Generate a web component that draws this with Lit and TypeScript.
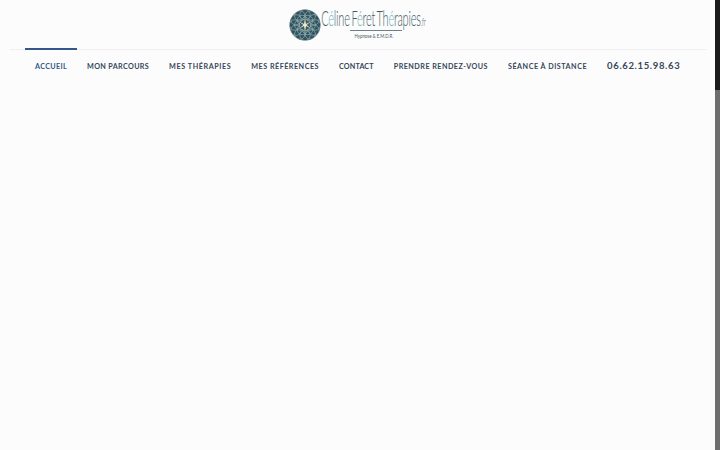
import { LitElement, html, css, svg } from "lit";
import { customElement } from "lit/decorators.js";

const items = [
  { label: "ACCUEIL", active: true, spacing: 0.35 },
  { label: "MON PARCOURS", active: false, spacing: 0.35 },
  { label: "MES THÉRAPIES", active: false, spacing: 0.58 },
  { label: "MES RÉFÉRENCES", active: false, spacing: 0.5 },
  { label: "CONTACT", active: false, spacing: 0.15 },
  { label: "PRENDRE RENDEZ-VOUS", active: false, spacing: 0.47 },
  { label: "SÉANCE À DISTANCE", active: false, spacing: 0.52 },
];

function petals() {
  const out = [];
  for (let ring = 1; ring <= 2; ring++) {
    const n = ring * 6;
    for (let i = 0; i < n; i++) {
      const a = (i / n) * Math.PI * 2;
      const r = ring * 5.2;
      out.push(
        svg`<circle cx=${16 + r * Math.cos(a)} cy=${16 + r * Math.sin(a)} r="5.2" fill="none" stroke="#8fb3b5" stroke-width="0.7"/>`
      );
    }
  }
  return out;
}

@customElement("app-root")
export class AppRoot extends LitElement {
  static styles = css`
    :host {
      display: block;
      height: 450px;
      background: #fcfcfc;
      font-family: "Lato", "Open Sans", sans-serif;
      overflow: hidden;
    }
    .page {
      display: flex;
      height: 450px;
    }
    .main {
      flex: 1;
      min-width: 0;
    }
    .scroll {
      width: 5px;
      background: #6e6e6e;
    }
    .thumb {
      height: 90px;
      background: #1c1c1c;
    }
    .logo-row {
      height: 49px;
      display: flex;
      justify-content: flex-start;
      align-items: center;
      gap: 1px;
      padding-left: 289px;
      box-sizing: border-box;
    }
    .logo-mark {
      width: 32px;
      height: 32px;
      display: block;
      flex: none;
    }
    .logo-text {
      display: flex;
      flex-direction: column;
      align-items: center;
      width: 108px;
      color: #3e5a66;
    }
    .brand {
      font-size: 21px;
      font-weight: 300;
      line-height: 17px;
      white-space: nowrap;
      transform: translateX(-3px) scaleX(0.525);
      letter-spacing: -0.4px;
      word-spacing: -2px;
    }
    .brand i {
      font-style: normal;
      color: #6fb0bd;
    }
    .brand small {
      font-size: 11px;
    }
    .tag {
      font-size: 6px;
      line-height: 8px;
      border-top: 1px solid #6d7f88;
      padding: 1px 0 0;
      white-space: nowrap;
      width: 52px;
      display: flex;
      justify-content: center;
      box-sizing: border-box;
    }
    .tag span {
      flex: none;
      transform: translateX(-2px) scaleX(0.72);
    }
    nav {
      margin: 0 8px 0 10px;
      border-top: 1px solid #f0f0f2;
      display: flex;
      padding-left: 15px;
      align-items: flex-start;
    }
    a {
      display: block;
      margin-top: -2px;
      padding: 10px 10px 0;
      border-top: 2px solid transparent;
      font-size: 7.2px;
      line-height: 14px;
      font-weight: 700;
      color: #36465a;
      white-space: nowrap;
    }
    a.active {
      border-top-color: #34568b;
      color: #34568b;
    }
    a.phone {
      padding-top: 9px;
      font-size: 9.5px;
      letter-spacing: 0.65px;
      font-weight: 700;
    }
  `;

  render() {
    return html`
      <div class="page">
        <div class="main">
          <div class="logo-row">
            <svg class="logo-mark" viewBox="0 0 32 32">
              <defs>
                <clipPath id="c"><circle cx="16" cy="16" r="15.5" /></clipPath>
              </defs>
              <circle cx="16" cy="16" r="15.5" fill="#34525e" />
              <g clip-path="url(#c)">${petals()}</g>
              <circle cx="16" cy="16" r="5" fill="#3d5f6a" />
              <path
                d="M16 9.5 17 15 22 12.5 17.6 16 22 19.5 17 17 16 22.5 15 17 10 19.5 14.4 16 10 12.5 15 15Z"
                fill="#f3e7c2"
              />
            </svg>
            <div class="logo-text">
              <div class="brand">C<i>é</i>line F<i>é</i>ret Th<i>é</i>rapies<small>.fr</small></div>
              <div class="tag"><span>Hypnose &amp; E.M.D.R.</span></div>
            </div>
          </div>
          <nav>
            ${items.map(
              (it) =>
                html`<a class=${it.active ? "active" : ""} style="letter-spacing:${it.spacing}px">${it.label}</a>`
            )}
            <a class="phone">06.62.15.98.63</a>
          </nav>
        </div>
        <div class="scroll"><div class="thumb"></div></div>
      </div>
    `;
  }
}
